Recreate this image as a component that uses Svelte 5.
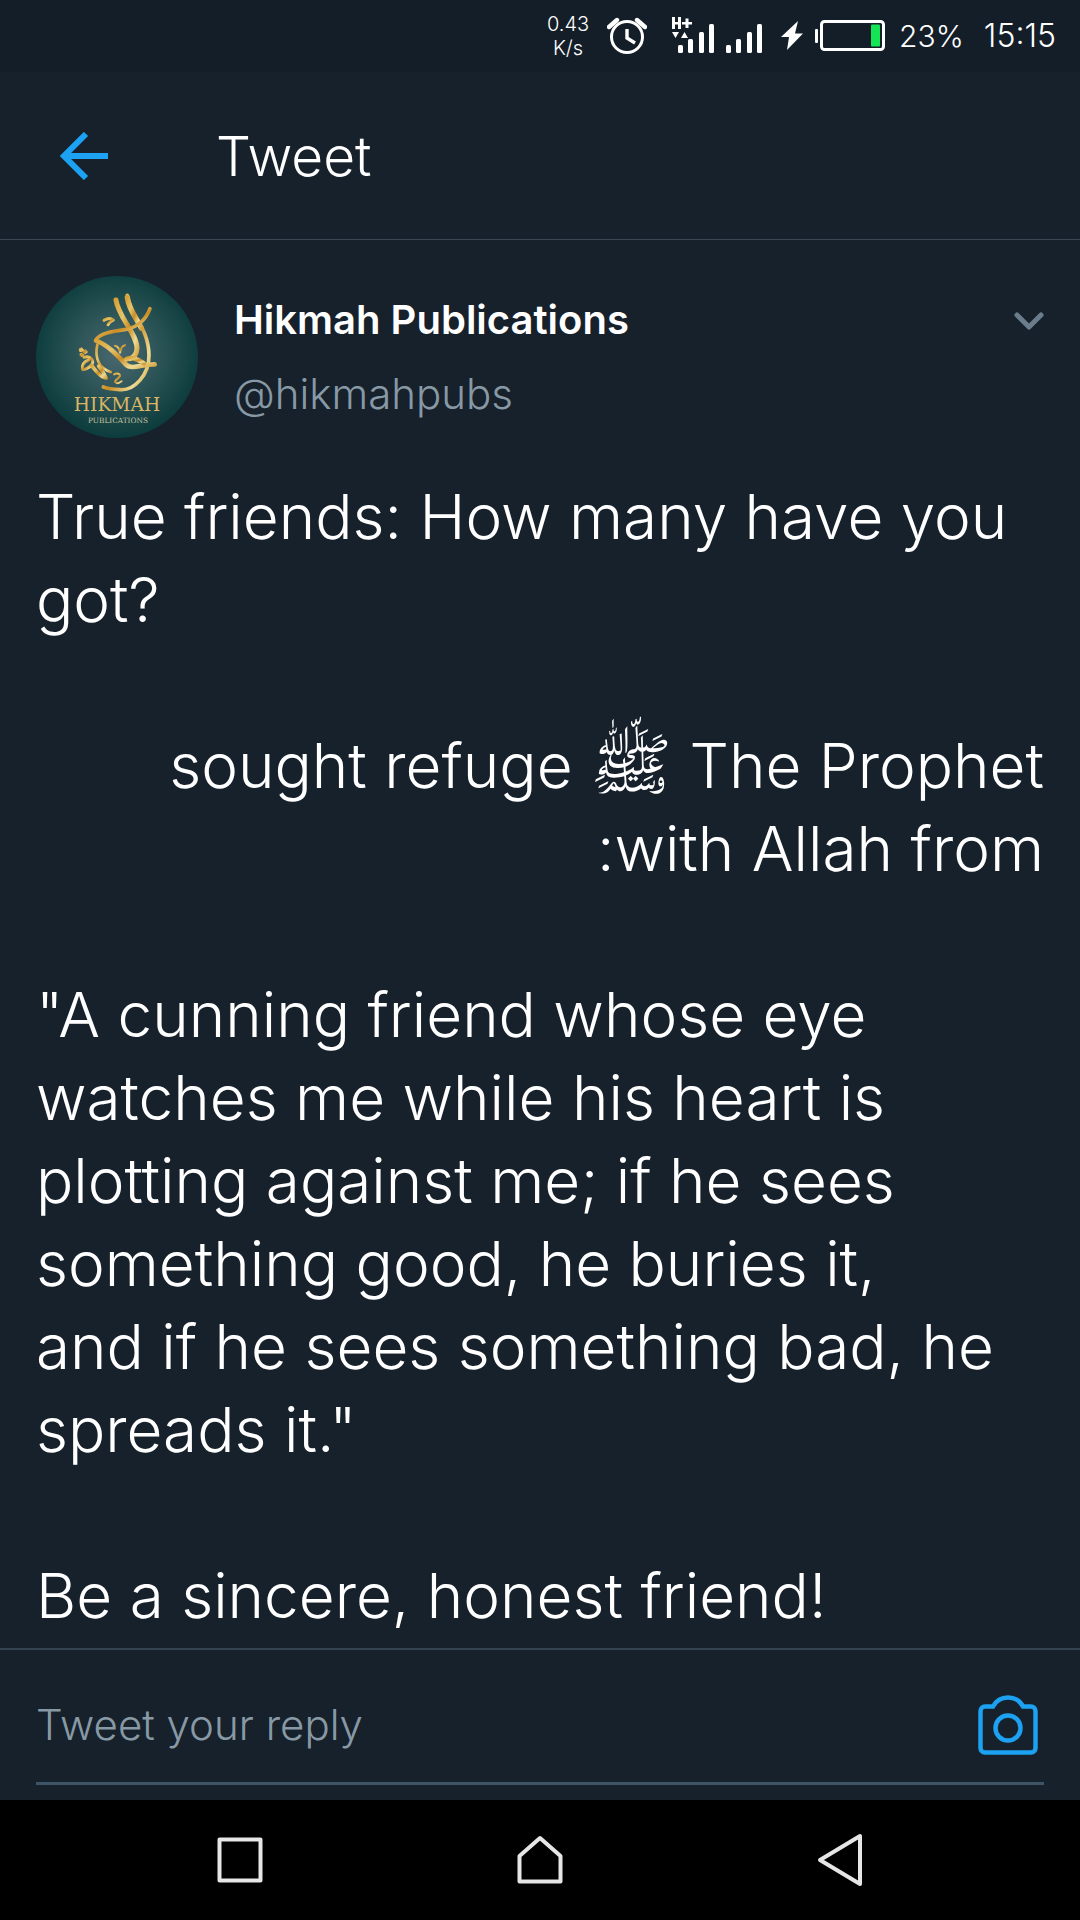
<script>
  let reply = $state('');
</script>

<div class="screen">
  <div class="status">
    <div class="speed"><span>0.43</span><span>K/s</span></div>
    <svg class="alarm" width="40" height="38" viewBox="0 0 40 38" fill="none" stroke="#fff" stroke-width="3">
      <circle cx="20" cy="20" r="15.5" />
      <path d="M20 12v9l8 5" stroke-width="3.4" />
      <path d="M2 10l8-7M38 10l-8-7" stroke-width="4.4" stroke-linecap="round" />
    </svg>
    <svg class="signal" width="94" height="40" viewBox="0 0 94 40" fill="#fff">
      <path d="M1 1h3v5h3V1h3v12H7V8.500H4V13H1zM14.500 2.500h3V6H21v2.500h-3.500V12h-3V8.500H11V6h3.500z" />
      <path d="M1 16h7l-3.500 6zM10 22h7l-3.500-6z" />
      <rect x="7" y="29" width="5" height="8" rx="1.500" />
      <rect x="17" y="23" width="5" height="14" rx="1.500" />
      <rect x="28" y="16" width="5" height="21" rx="1.500" />
      <rect x="38" y="8" width="5" height="29" rx="1.500" />
      <rect x="55" y="29" width="5" height="8" rx="1.500" />
      <rect x="65" y="23" width="5" height="14" rx="1.500" />
      <rect x="76" y="16" width="5" height="21" rx="1.500" />
      <rect x="86" y="8" width="5" height="29" rx="1.500" />
    </svg>
    <svg class="battery" width="106" height="34" viewBox="0 0 106 34">
      <path d="M17 2L0 18h8L6 31 22 14.500h-8z" fill="#fff" />
      <rect x="34" y="10" width="3" height="14" rx="1" fill="#fff" />
      <rect x="40.500" y="2.500" width="62" height="28" rx="3" fill="none" stroke="#fff" stroke-width="3" />
      <rect x="90" y="5.500" width="9" height="22" rx="1" fill="#15e455" />
    </svg>
    <span class="percent">23%</span>
    <span class="clock">15:15</span>
  </div>

  <header>
    <button class="back" aria-label="Back">
      <svg width="48" height="48" viewBox="0 0 48 48" fill="none" stroke="#1da1f2" stroke-width="6">
        <path d="M48 24H5M26 2L4 24l22 22" />
      </svg>
    </button>
    <h1>Tweet</h1>
  </header>

  <main>
    <div class="author">
      <svg class="avatar" width="162" height="162" viewBox="48 48 486 486" role="img" aria-label="Hikmah Publications logo">
        <defs>
          <radialGradient id="teal" cx="50%" cy="48%" r="52%">
            <stop offset="0" stop-color="#49686f" />
            <stop offset="0.5" stop-color="#2c5457" />
            <stop offset="1" stop-color="#0c3c3d" />
          </radialGradient>
          <linearGradient id="gold" x1="0" y1="0" x2="1" y2="1">
            <stop offset="0" stop-color="#d8a238" />
            <stop offset="0.3" stop-color="#e6c56b" />
            <stop offset="0.55" stop-color="#c98d25" />
            <stop offset="0.8" stop-color="#eedb94" />
            <stop offset="1" stop-color="#d3a13e" />
          </linearGradient>
        </defs>
        <circle cx="291" cy="291" r="243" fill="url(#teal)" />
        <g fill="none" stroke="url(#gold)" stroke-linecap="round" stroke-linejoin="round">
          <path d="M288 120C294 170 352 222 351 266C350 284 342 292 330 296" stroke-width="15" />
          <path d="M322 106C328 164 386 200 387 286C388 346 342 392 300 389C282 388 264 386 250 381" stroke-width="11" />
          <path d="M322 112C326 148 350 176 364 204" stroke-width="16" />
          <path d="M390 146C376 182 350 202 318 208C276 214 238 220 228 240" stroke-width="11" />
          <path d="M228 242C262 254 290 284 316 312C336 332 366 312 404 313" stroke-width="14" />
          <path d="M318 298C334 290 354 298 372 310" stroke-width="14" />
          <path d="M232 254C222 296 240 326 272 336" stroke-width="8" />
          <path d="M192 292C212 286 224 302 214 316C206 324 190 330 188 328C184 316 192 304 206 300" stroke-width="9" />
          <path d="M214 316C226 328 234 348 258 354C252 338 246 330 236 318" stroke-width="11" />
          <path d="M252 181C262 174 272 174 280 180C272 184 266 188 264 194" stroke-width="9" />
          <path d="M285 257C294 258 298 266 300 278C302 266 308 258 315 256" stroke-width="6" />
          <path d="M282 343C290 338 302 342 300 348C294 358 282 362 286 367C292 372 300 368 305 364" stroke-width="6" />
        </g>
        <g fill="url(#gold)">
          <path d="M176 266l9-4 8 8-7 7-8-2zM190 271l8-3 6 8-7 7-8-4zM179 280l8-2 7 7-8 7-7-5z" />
        </g>
        <g text-anchor="middle" font-family="'DejaVu Serif', serif">
          <text x="291" y="453" font-size="56" fill="#d9b565">HIKMAH</text>
          <text x="294" y="489" font-size="22" fill="#c9c4a0">PUBLICATIONS</text>
        </g>
      </svg>
      <div class="names">
        <strong>Hikmah Publications</strong>
        <span>@hikmahpubs</span>
      </div>
      <button class="more" aria-label="More options">
        <svg width="30" height="20" viewBox="0 0 30 20" fill="none" stroke="#6b7d8c" stroke-width="5" stroke-linecap="round" stroke-linejoin="round">
          <path d="M3 3l12 12L27 3" />
        </svg>
      </button>
    </div>

    <article>
      <p>True friends: How many have you<br />got?</p>
      <p dir="rtl">The Prophet <span class="salutation">ﷺ</span> sought refuge<br />with Allah from:</p>
      <p>
        "A cunning friend whose eye<br />watches me while his heart is<br />plotting against me; if he sees<br />something
        good, he buries it,<br />and if he sees something bad, he<br />spreads it."
      </p>
      <p>Be a sincere, honest friend!</p>
    </article>
  </main>

  <form>
    <div class="field">
      <input type="text" placeholder="Tweet your reply" aria-label="Tweet your reply" bind:value={reply} />
      <button type="button" aria-label="Add photo">
        <svg width="60" height="60" viewBox="0 0 60 60" fill="none" stroke="#1da1f2" stroke-width="4.500">
          <path d="M7 11.500H15C18 6 23 2.500 30 2.500S42 6 45 11.500h8a4.500 4.500 0 0 1 4.500 4.500v37a4.500 4.500 0 0 1-4.500 4.500H7A4.500 4.500 0 0 1 2.500 53V16A4.500 4.500 0 0 1 7 11.500z" />
          <circle cx="30" cy="33" r="12.500" />
        </svg>
      </button>
    </div>
  </form>

  <nav aria-label="System">
    <button aria-label="Recent apps">
      <svg width="52" height="56" viewBox="0 0 52 56"><rect x="5.500" y="7.500" width="41" height="41" /></svg>
    </button>
    <button aria-label="Home">
      <svg width="52" height="56" viewBox="0 0 52 56"><path d="M5.500 49.500V24L26 6l20.500 18v25.500z" /></svg>
    </button>
    <button aria-label="Back to previous">
      <svg width="52" height="56" viewBox="0 0 52 56"><path d="M46 4v48L6 28z" /></svg>
    </button>
  </nav>
</div>

<style>
  :global(body) {
    margin: 0;
    background: #17212b;
  }

  .screen {
    display: flex;
    flex-direction: column;
    min-height: 100vh;
    background: #17212b;
    color: #fff;
    font-family: Inter, 'Open Sans', 'DejaVu Sans', sans-serif;
    font-weight: 300;
  }

  button {
    display: flex;
    padding: 0;
    border: 0;
    background: none;
    cursor: pointer;
  }

  svg {
    display: block;
    flex: none;
  }

  .status {
    display: flex;
    align-items: center;
    justify-content: flex-end;
    height: 72px;
    padding-right: 24px;
    background: #141e28;
    font-size: 32px;
    line-height: 40px;
  }

  .speed {
    display: flex;
    flex-direction: column;
    align-items: center;
    margin-right: 18px;
    font-size: 20px;
    line-height: 24px;
  }

  .alarm {
    margin-right: 24px;
  }

  .signal {
    margin-right: 16px;
  }

  .battery {
    margin-right: 12px;
  }

  .percent {
    margin-right: 20px;
    font-size: 30px;
  }

  header {
    display: flex;
    align-items: center;
    gap: 108px;
    height: 167px;
    padding: 0 60px;
    border-bottom: 1px solid #3a4651;
  }

  h1 {
    margin: 0;
    font-size: 55px;
    font-weight: 300;
    line-height: 64px;
  }

  main {
    flex: 1;
    padding: 36px 36px 11px;
  }

  .author {
    display: flex;
    gap: 36px;
  }

  .names {
    display: flex;
    flex: 1;
    flex-direction: column;
    gap: 22px;
    padding-top: 18px;
    line-height: 52px;
  }

  .names strong {
    font-size: 40px;
    font-weight: 600;
  }

  .names span {
    font-size: 42px;
    color: #8899a6;
  }

  .more {
    align-self: flex-start;
    padding-top: 36px;
  }

  article {
    display: flex;
    flex-direction: column;
    gap: 83px;
    padding-top: 37px;
    font-size: 62px;
    line-height: 83px;
  }

  p {
    margin: 0;
    white-space: normal;
  }

  .salutation {
    font-size: 68px;
    line-height: 1;
  }

  form {
    padding: 0 36px 15px;
    border-top: 2px solid #33434f;
  }

  .field {
    display: flex;
    align-items: center;
    height: 114px;
    padding: 18px 6px 0 0;
    border-bottom: 3px solid #3d5466;
  }

  .field input {
    flex: 1;
    min-width: 0;
    padding: 0;
    border: 0;
    outline: 0;
    background: none;
    color: #fff;
    font: inherit;
    font-size: 42px;
    line-height: 52px;
  }

  .field input::placeholder {
    color: #8899a6;
    opacity: 1;
  }

  nav {
    display: flex;
    align-items: center;
    justify-content: space-between;
    height: 120px;
    padding: 0 214px;
    background: #000;
  }

  nav svg {
    fill: none;
    stroke: #e6e6e6;
    stroke-width: 4;
    stroke-linejoin: round;
  }
</style>
